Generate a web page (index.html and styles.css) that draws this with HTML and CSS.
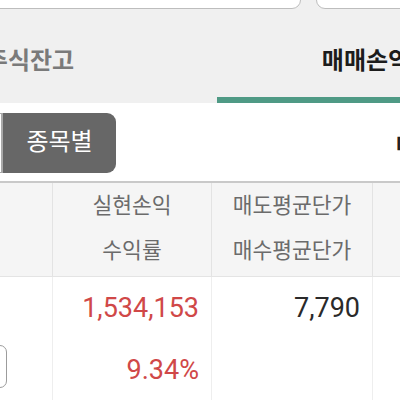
FILE: index.html
```html
<!DOCTYPE html>
<html lang="ko">

<head>
    <meta charset="UTF-8">
    <meta name="viewport" content="width=device-width, initial-scale=1.0">
    <title>매매손익</title>
    <link rel="stylesheet" href="styles.css">
</head>

<body>
    <div id="screen">
        <div class="search-row">
            <div class="search-box search-main">종목명 검색</div>
            <div class="search-box search-side"></div>
        </div>

        <div class="tabs">
            <div class="tab tab-left">주식잔고</div>
            <div class="tab tab-active">매매손익</div>
        </div>

        <div class="filter-row">
            <div class="segment">
                <span class="seg-item seg-off"></span>
                <span class="seg-item seg-on">종목별</span>
            </div>
            <span class="period-label">매도</span>
        </div>

        <div class="grid">
            <div class="grid-head">
                <div class="cell cell-first"></div>
                <div class="cell cell-mid">
                    <span>실현손익</span>
                    <span>수익률</span>
                </div>
                <div class="cell cell-mid">
                    <span>매도평균단가</span>
                    <span>매수평균단가</span>
                </div>
                <div class="cell cell-last"></div>
            </div>
            <div class="grid-row">
                <div class="cell cell-first">
                    <span class="row-btn"></span>
                </div>
                <div class="cell cell-mid num">
                    <span class="up">1,534,153</span>
                    <span class="up">9.34%</span>
                </div>
                <div class="cell cell-mid num">
                    <span>7,790</span>
                    <span></span>
                </div>
                <div class="cell cell-last"></div>
            </div>
        </div>
    </div>
</body>

</html>
```

FILE: styles.css
```css
html,
body {
    margin: 0;
    padding: 0;
    overflow: hidden;
}

body {
    font-family: Roboto, "Noto Sans CJK KR", sans-serif;
    background-color: #ffffff;
    width: 400px;
    height: 400px;
}

#screen {
    width: 400px;
}

/* top search bar, mostly scrolled away */
.search-row {
    display: flex;
    background-color: #f0f0f0;
    height: 9px;
    overflow: hidden;
    align-items: flex-end;
}

.search-box {
    flex: none;
    height: 48px;
    box-sizing: border-box;
    background: #fff;
    border: 1px solid #bdbdbd;
    border-radius: 9px;
    color: #9a9a9a;
    font-size: 18px;
    line-height: 52px;
    padding-left: 12px;
}

.search-main {
    margin-left: -20px;
    width: 321px;
}

.search-side {
    margin-left: 15px;
    width: 120px;
}

/* tabs */
.tabs {
    display: flex;
    background-color: #f0f0f0;
    margin-left: -157px;
    width: 672px;
    height: 94px;
}

.tab {
    flex: none;
    box-sizing: border-box;
    height: 94px;
    padding-top: 36px;
    line-height: 32px;
    font-size: 24px;
    font-weight: 700;
    text-align: center;
}

.tab-left {
    width: 374px;
    color: #7a7a7a;
}

.tab-active {
    width: 298px;
    color: #1c1c1c;
    border-bottom: 6px solid #4f9a85;
}

/* filter */
.filter-row {
    display: flex;
    align-items: center;
    height: 78px;
    box-sizing: border-box;
    padding-top: 2px;
}

.segment {
    display: flex;
    flex: none;
    margin-left: -97px;
}

.seg-item {
    flex: none;
    height: 60px;
    box-sizing: border-box;
    line-height: 58px;
    font-size: 24px;
    font-weight: 400;
}

.seg-off {
    width: 100px;
    border: 1px solid #a9a9a9;
    border-right: 2px solid #a9a9a9;
    border-radius: 8px 0 0 8px;
    background: #fff;
}

.seg-on {
    width: 113px;
    background-color: #676767;
    color: #fff;
    text-align: center;
    border-radius: 0 9px 9px 0;
}

.period-label {
    flex: none;
    margin-left: 280px;
    font-size: 22px;
    font-weight: 700;
    color: #222;
    white-space: nowrap;
}

/* table */
.grid {
    border-top: 2px solid #c9c9c9;
}

.grid-head,
.grid-row {
    display: flex;
}

.grid-head {
    background-color: #f5f5f5;
    border-bottom: 1px solid #e4e4e4;
    height: 93px;
    color: #6b6b6b;
    font-size: 21.5px;
}

.grid-row {
    height: 123px;
    font-size: 27px;
    color: #2a2a2a;
}

.cell {
    flex: none;
    display: flex;
    flex-direction: column;
    box-sizing: border-box;
}

.grid-head .cell span {
    line-height: 45px;
    text-align: center;
}

.cell-first {
    width: 52px;
}

.cell-mid {
    width: 159px;
    border-left: 1px solid #e3e3e3;
}

.cell-mid + .cell-mid {
    width: 161px;
}

.cell-last {
    width: 40px;
    border-left: 1px solid #e3e3e3;
}

.grid-row .cell-mid,
.grid-row .cell-last {
    border-left-color: #eeeeee;
}

.num span {
    line-height: 62px;
    height: 62px;
    text-align: right;
    padding-right: 12px;
}

.up {
    color: #d04848;
}

.row-btn {
    display: block;
    margin-top: 68px;
    margin-left: -40px;
    width: 47px;
    height: 43px;
    box-sizing: border-box;
    border: 1.5px solid #9c9c9c;
    border-radius: 7px;
    background: #fff;
}
```
